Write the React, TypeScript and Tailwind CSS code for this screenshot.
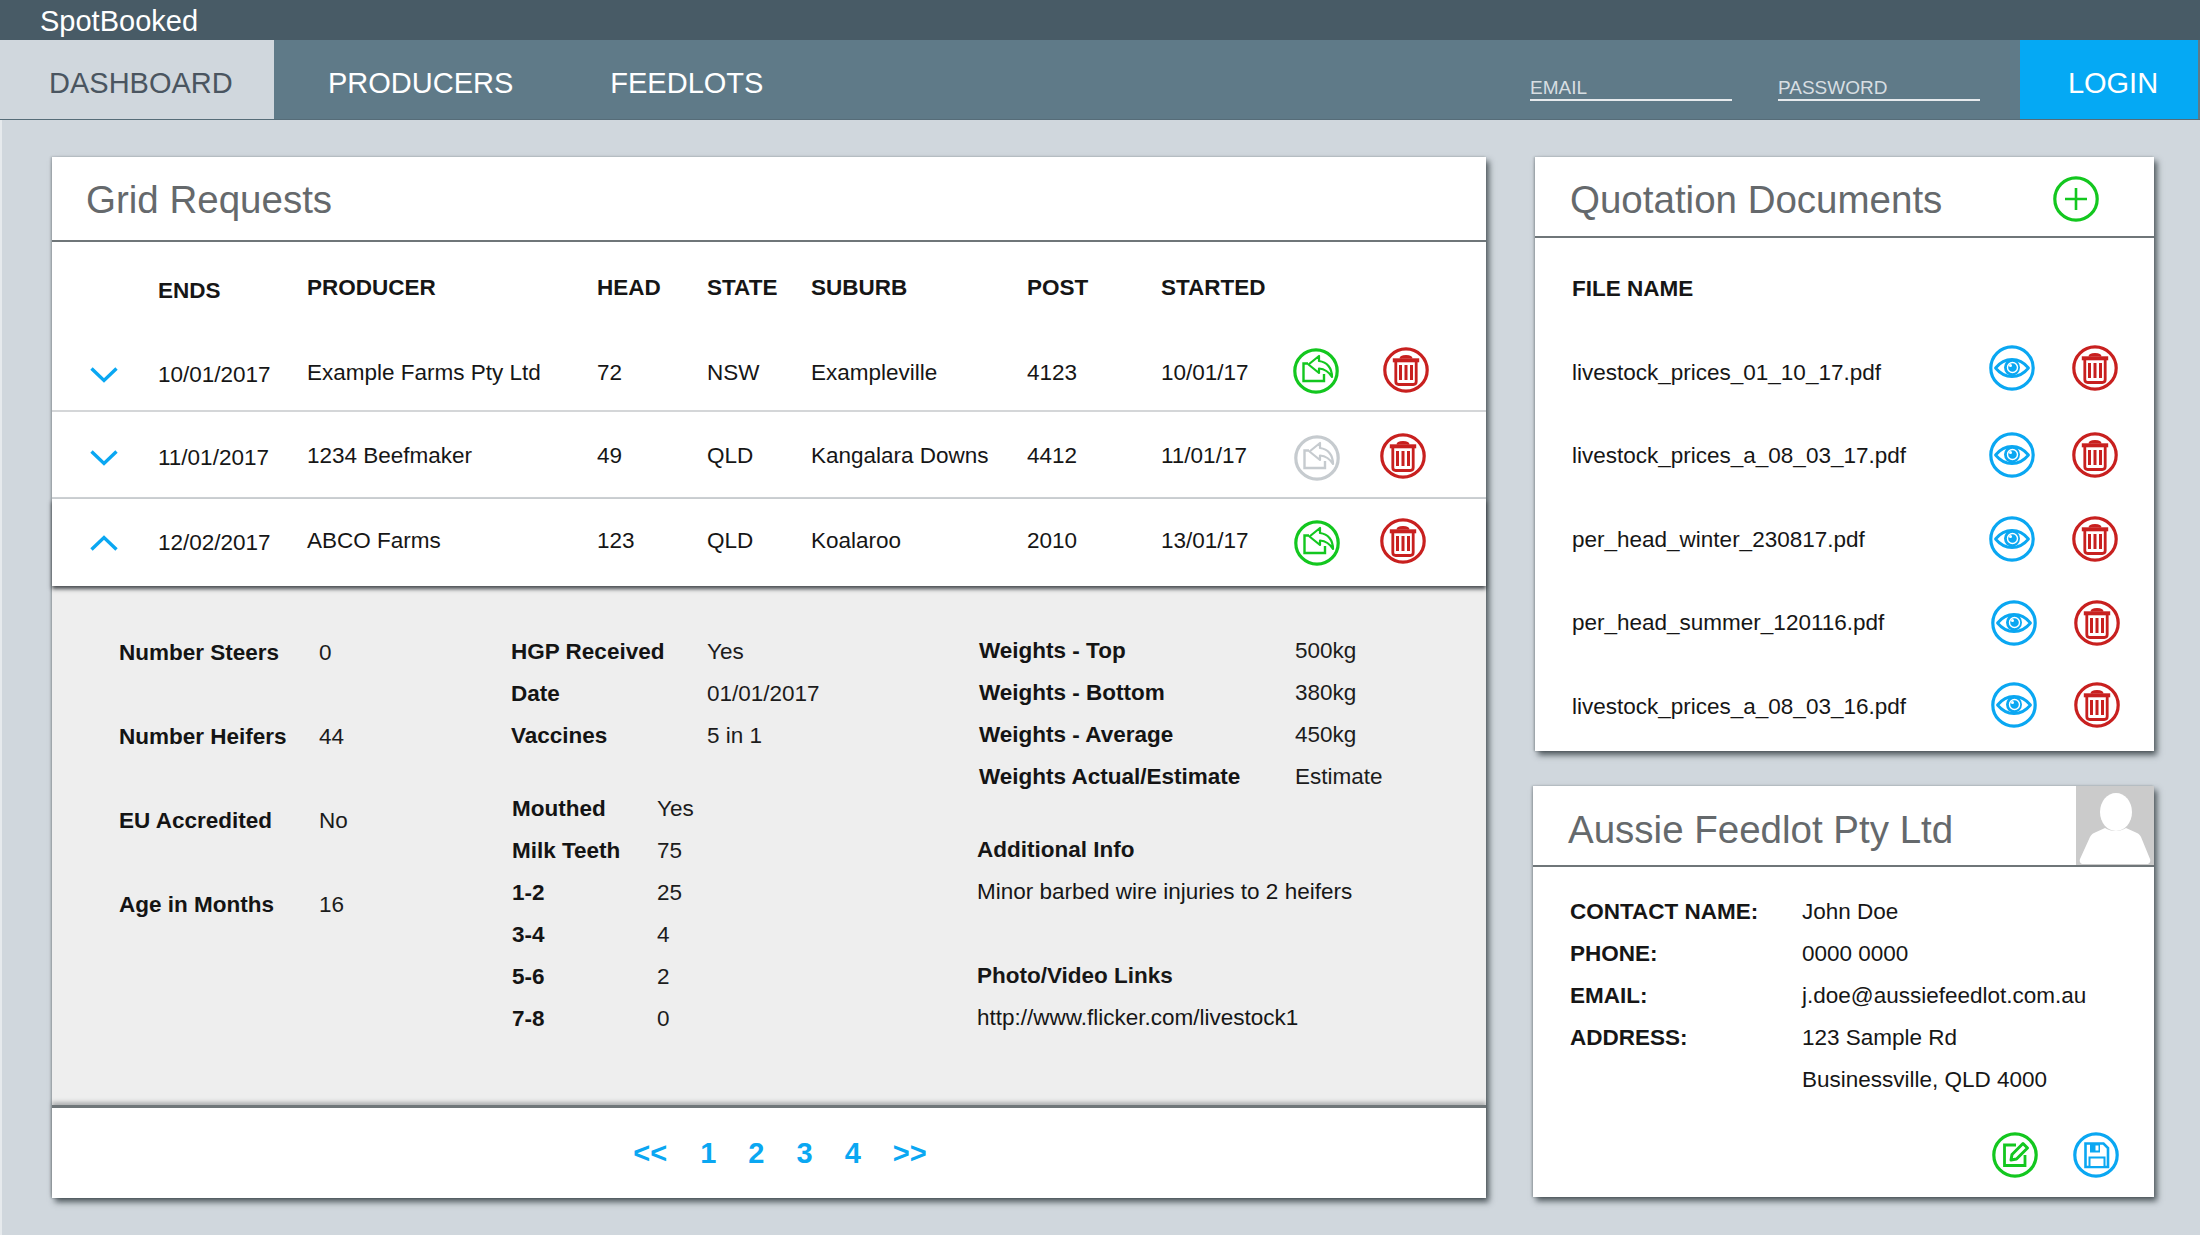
import type { ReactNode } from "react";

// ── Data ───────────────────────────────────────────────────────────
const REQUESTS = [
  { ends: "10/01/2017", producer: "Example Farms Pty Ltd", head: "72", state: "NSW", suburb: "Exampleville", post: "4123", started: "10/01/17", open: false, active: true },
  { ends: "11/01/2017", producer: "1234 Beefmaker", head: "49", state: "QLD", suburb: "Kangalara Downs", post: "4412", started: "11/01/17", open: false, active: false },
  { ends: "12/02/2017", producer: "ABCO Farms", head: "123", state: "QLD", suburb: "Koalaroo", post: "2010", started: "13/01/17", open: true, active: true },
];

// the icons sit a little off the text line in each row of the mockup
const FILES = [
  { name: "livestock_prices_01_10_17.pdf", icons: "ml-[1px] -mt-[9px]" },
  { name: "livestock_prices_a_08_03_17.pdf", icons: "ml-[1px] -mt-[3px]" },
  { name: "per_head_winter_230817.pdf", icons: "ml-[1px] -mt-[1px]" },
  { name: "per_head_summer_120116.pdf", icons: "ml-[3px] -mt-[1px]" },
  { name: "livestock_prices_a_08_03_16.pdf", icons: "ml-[3px] -mt-[3px]" },
];

const GREEN = "#13c71f";
const RED = "#c8201f";
const BLUE = "#0aa7f2";
const GREY = "#c6cbcf";

// ── Icons ──────────────────────────────────────────────────────────
function Ring({ color, children }: { color: string; children: ReactNode }) {
  return (
    <svg width="46" height="46" viewBox="0 0 46 46" className="shrink-0">
      <circle cx="23" cy="23" r="21.2" fill="none" stroke={color} strokeWidth="3.2" />
      {children}
    </svg>
  );
}

function ShareIcon({ color }: { color: string }) {
  return (
    <Ring color={color}>
      <path d="M15 15.5h-4.5v17.5h20.5v-7" fill="none" stroke={color} strokeWidth="2.4" />
      <path d="M15.5 16.5L26 8v5c8 1 13 7 13 16-3-5-7-8-13-8.500V25z" fill="#fff" stroke={color} strokeWidth="2.2" strokeLinejoin="round" />
    </Ring>
  );
}

function TrashIcon() {
  return (
    <Ring color={RED}>
      <path d="M17.500 11.500c0-3.500 11-3.500 11 0" fill={RED} stroke={RED} strokeWidth="2" />
      <path d="M9.800 11.300h26.400v4H9.800z" fill={RED} />
      <path d="M12.800 15v19.500c0 2 1 3 3 3h14.400c2 0 3-1 3-3V15" fill="none" stroke={RED} strokeWidth="2.8" />
      <path d="M17.500 18v15M23 18v15M28.500 18v15" stroke={RED} strokeWidth="3" />
    </Ring>
  );
}

function EyeIcon() {
  return (
    <Ring color={BLUE}>
      <path d="M6.500 23c4.500-5.500 10-8.500 16.500-8.500S35 17.500 39.500 23c-4.500 5.500-10 8.500-16.500 8.500S11 28.500 6.500 23z" fill="none" stroke={BLUE} strokeWidth="2.800" strokeLinejoin="round" />
      <circle cx="23" cy="22.500" r="8" fill={BLUE} />
      <circle cx="23.500" cy="22.500" r="5" fill="none" stroke="#fff" strokeWidth="1.400" />
      <circle cx="21.500" cy="20.500" r="1.500" fill="#fff" />
    </Ring>
  );
}

function PlusIcon() {
  return (
    <Ring color={GREEN}>
      <path d="M23 12v22M12 23h22" stroke={GREEN} strokeWidth="2.600" />
    </Ring>
  );
}

function EditIcon() {
  return (
    <Ring color={GREEN}>
      <path d="M24 13H12.500v20.500H33V23" fill="none" stroke={GREEN} strokeWidth="2.800" />
      <path d="M19 28l1-5.500L31 11.500l4.500 4.500L24.500 27z" fill="#fff" stroke={GREEN} strokeWidth="3" strokeLinejoin="round" />
    </Ring>
  );
}

function SaveIcon() {
  return (
    <Ring color={BLUE}>
      <path d="M12.500 11.500h18l4.500 4.500v19H12.500z" fill="none" stroke={BLUE} strokeWidth="2.600" />
      <path d="M17 11.500h10v9H17z" fill={BLUE} />
      <path d="M22.500 13.500h3v5h-3z" fill="#fff" />
      <path d="M16.500 25.500h15v9.500h-15z" fill="#fff" stroke={BLUE} strokeWidth="2" />
    </Ring>
  );
}

function Chevron({ up }: { up: boolean }) {
  return (
    <svg width="28" height="16" viewBox="0 0 28 16" className="ml-[38px] mt-[4px]">
      <path d={up ? "M1.500 14.500L14 2.500l12.500 12" : "M1.500 1.500L14 13.500l12.500-12"} fill="none" stroke={BLUE} strokeWidth="3.400" />
    </svg>
  );
}

function Avatar() {
  return (
    <svg width="78" height="79" viewBox="0 0 78 79" className="shrink-0">
      <rect width="78" height="79" fill="#cbcbcb" />
      <ellipse cx="40" cy="26" rx="16" ry="19" fill="#fff" />
      <path d="M4 73l10-22c1-2 2-3 4-4l11-5c6 4 15 4 21 0l11 5c2 1 3 2 4 4l9 22c1 3-1 5-3 5H7c-2 0-4-2-3-5z" fill="#fff" />
    </svg>
  );
}

// ── Layout pieces ──────────────────────────────────────────────────
function TitleBar({ title, className, titleClass, children }: { title: string; className: string; titleClass: string; children?: ReactNode }) {
  return (
    <div className={`flex justify-between border-b-2 border-[#6f7679] ${className}`}>
      <h2 className={`text-[38.500px] leading-none text-[#65696c] ${titleClass}`}>{title}</h2>
      {children}
    </div>
  );
}

function Detail({ label, value }: { label: string; value: string }) {
  return (
    <>
      <span className="font-bold text-[#141414]">{label}</span>
      <span className="text-[#1c1c1c]">{value}</span>
    </>
  );
}

export default function App() {
  return (
    <div className="w-[2200px] h-[1235px] overflow-hidden bg-[#d0d7dd] font-['Liberation_Sans',Arial,sans-serif] text-[22.500px] text-[#161616]">
      {/* Top bars */}
      <div className="h-[40px] bg-[#485b66] pl-[40px] text-[29px] leading-[42px] text-white">SpotBooked</div>
      <nav className="h-[80px] flex bg-[#5f7a88] border-b border-[#566c78] pr-[2px]">
        <div className="w-[274px] bg-[#d0d7dd] pl-[49px] text-[29px] leading-[86px] text-[#4a5560]">DASHBOARD</div>
        <div className="pl-[54px] text-[29px] leading-[86px] text-white">PRODUCERS</div>
        <div className="pl-[97px] text-[29px] leading-[86px] text-white">FEEDLOTS</div>
        <div className="ml-auto flex">
          <div className="w-[202px] h-[61px] mr-[46px] border-b-2 border-[#e6eaed] pt-[36px] text-[19px] leading-[24px] text-[#d7dee2]">EMAIL</div>
          <div className="w-[202px] h-[61px] mr-[40px] border-b-2 border-[#e6eaed] pt-[36px] text-[19px] leading-[24px] text-[#d7dee2]">PASSWORD</div>
          <div className="w-[178px] bg-[#05a9f4] pl-[8px] text-center text-[29px] leading-[86px] text-white">LOGIN</div>
        </div>
      </nav>

      <main className="h-[1115px] flex items-start border-l-2 border-[#e6eaed] pl-[50px] pt-[37px]">
        {/* Grid requests */}
        <section className="w-[1434px] h-[1041px] flex flex-col bg-white shadow-[3px_4px_6px_rgba(35,45,50,0.75),-1px_0_2px_rgba(60,70,75,0.35)]">
          <TitleBar title="Grid Requests" className="h-[85px] pl-[34px]" titleClass="pt-[24px]" />

          <div className="h-[80px] grid grid-cols-[106px_149px_290px_110px_104px_216px_133px_1fr] items-center pt-[12px] font-bold">
            <span />
            <span className="pt-[6px]">ENDS</span>
            <span>PRODUCER</span>
            <span>HEAD</span>
            <span>STATE</span>
            <span>SUBURB</span>
            <span>POST</span>
            <span className="pl-[1px]">STARTED</span>
          </div>

          {REQUESTS.map((r, i) => (
            <div
              key={r.ends}
              className={`grid grid-cols-[106px_149px_290px_110px_104px_216px_133px_133px_90px_90px] items-center ${
                i === 0 ? "h-[90px] pt-[13px] border-b-2 border-[#d4d6d8]" : i === 1 ? "h-[87px] pt-[3px] border-b-2 border-[#cfd3d6]" : "h-[87px] pb-[3px] relative z-10 shadow-[0_3px_4px_rgba(30,35,40,0.8)]"
              }`}
            >
              <Chevron up={r.open} />
              <span className="pt-[4px]">{r.ends}</span>
              <span>{r.producer}</span>
              <span>{r.head}</span>
              <span>{r.state}</span>
              <span>{r.suburb}</span>
              <span>{r.post}</span>
              <span className="pl-[1px]">{r.started}</span>
              <span className={i === 0 ? "-mt-[3px]" : "mt-[3px] ml-[1px]"}>
                <ShareIcon color={r.active ? GREEN : GREY} />
              </span>
              <span className={i === 0 ? "-mt-[6px]" : "-ml-[3px]"}>
                <TrashIcon />
              </span>
            </div>
          ))}

          {/* Expanded row details */}
          <div className="h-[519px] flex bg-[#eeeeee] pl-[67px] leading-[42px]">
            <div className="w-[392px] pt-[25px] grid grid-cols-[200px_1fr] auto-rows-[84px] items-center content-start">
              <Detail label="Number Steers" value="0" />
              <Detail label="Number Heifers" value="44" />
              <Detail label="EU Accredited" value="No" />
              <Detail label="Age in Months" value="16" />
            </div>

            <div className="w-[468px] pt-[45px]">
              <div className="grid grid-cols-[196px_1fr]">
                <Detail label="HGP Received" value="Yes" />
                <Detail label="Date" value="01/01/2017" />
                <Detail label="Vaccines" value="5 in 1" />
              </div>
              <div className="grid grid-cols-[145px_1fr] mt-[31px] ml-[1px]">
                <Detail label="Mouthed" value="Yes" />
                <Detail label="Milk Teeth" value="75" />
                <Detail label="1-2" value="25" />
                <Detail label="3-4" value="4" />
                <Detail label="5-6" value="2" />
                <Detail label="7-8" value="0" />
              </div>
            </div>

            <div className="pt-[44px]">
              <div className="grid grid-cols-[316px_1fr]">
                <Detail label="Weights - Top" value="500kg" />
                <Detail label="Weights - Bottom" value="380kg" />
                <Detail label="Weights - Average" value="450kg" />
                <Detail label="Weights Actual/Estimate" value="Estimate" />
              </div>
              <div className="mt-[31px] -ml-[2px]">
                <p className="font-bold">Additional Info</p>
                <p>Minor barbed wire injuries to 2 heifers</p>
                <p className="font-bold mt-[42px]">Photo/Video Links</p>
                <p>http://www.flicker.com/livestock1</p>
              </div>
            </div>
          </div>

          {/* Pagination */}
          <div className="flex-1 relative z-10 flex items-center justify-center gap-[32px] bg-white border-t-[3px] border-[#6f7679] shadow-[0_-3px_4px_rgba(60,65,70,0.35)] text-[29px] font-bold text-[#0aa7f2] pl-[22px] pt-[2px]">
            <span>&lt;&lt;</span>
            <span className="ml-[1px]">1</span>
            <span>2</span>
            <span>3</span>
            <span>4</span>
            <span>&gt;&gt;</span>
          </div>
        </section>

        <aside className="w-[619px] ml-[49px] flex flex-col">
          {/* Quotation documents */}
          <section className="h-[594px] bg-white shadow-[3px_4px_6px_rgba(35,45,50,0.75),-1px_0_2px_rgba(60,70,75,0.35)]">
            <TitleBar title="Quotation Documents" className="h-[81px] pl-[35px] pr-[55px] items-start" titleClass="pt-[24px]">
              <div className="pt-[19px]">
                <PlusIcon />
              </div>
            </TitleBar>
            <div className="pl-[37px] pt-[24px] font-bold leading-[54px]">FILE NAME</div>
            {FILES.map((f, i) => (
              <div key={f.name} className={`flex items-center pl-[37px] h-[83.500px] ${i === 0 ? "mt-[15px]" : ""}`}>
                <span className="w-[416px]">{f.name}</span>
                <span className={`flex gap-[37px] ${f.icons}`}>
                  <EyeIcon />
                  <TrashIcon />
                </span>
              </div>
            ))}
          </section>

          {/* Feedlot contact */}
          <section className="h-[411px] mt-[35px] -ml-[2px] bg-white shadow-[3px_4px_6px_rgba(35,45,50,0.75),-1px_0_2px_rgba(60,70,75,0.35)]">
            <TitleBar title="Aussie Feedlot Pty Ltd" className="h-[81px] pl-[35px]" titleClass="pt-[25px]">
              <Avatar />
            </TitleBar>
            <div className="grid grid-cols-[232px_1fr] pl-[37px] pt-[24px] leading-[42px]">
              <span className="font-bold">CONTACT NAME:</span>
              <span>John Doe</span>
              <span className="font-bold">PHONE:</span>
              <span>0000 0000</span>
              <span className="font-bold">EMAIL:</span>
              <span>j.doe@aussiefeedlot.com.au</span>
              <span className="font-bold">ADDRESS:</span>
              <span>123 Sample Rd</span>
              <span />
              <span>Businessville, QLD 4000</span>
            </div>
            <div className="flex justify-end gap-[35px] pr-[35px] pt-[31px]">
              <EditIcon />
              <SaveIcon />
            </div>
          </section>
        </aside>
      </main>
    </div>
  );
}
